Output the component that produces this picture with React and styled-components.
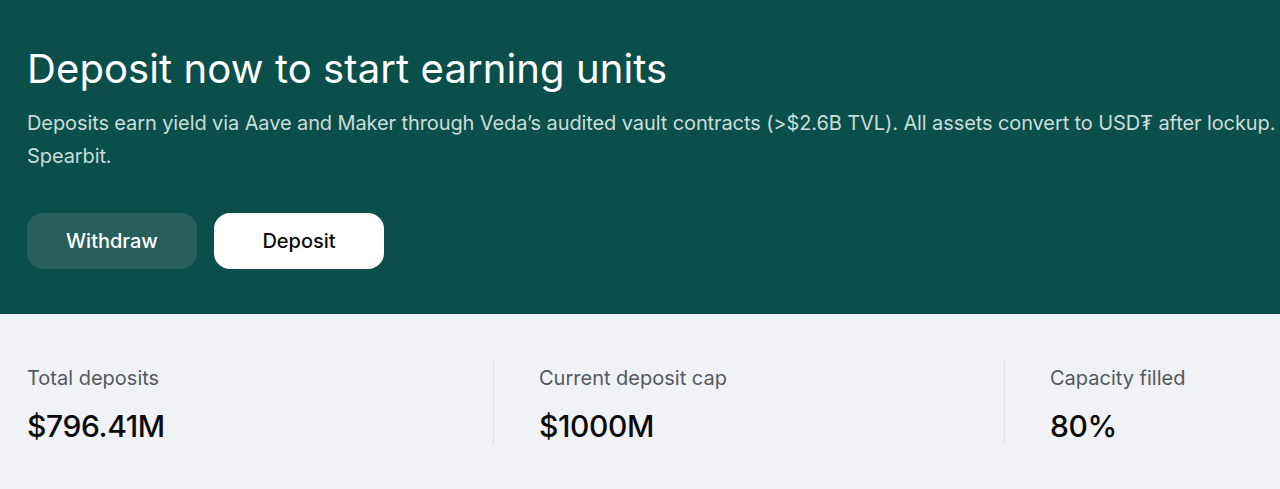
import React from "react";
import styled, { createGlobalStyle } from "styled-components";

const Global = createGlobalStyle`
  html, body { margin: 0; padding: 0; background: #f0f2f5; overflow: hidden; }
  body { font-family: Inter, "Noto Sans", "Liberation Sans", sans-serif; -webkit-font-smoothing: antialiased; }
  * { box-sizing: border-box; }
`;

const Page = styled.main`
  width: 1280px;
  overflow: hidden;
`;

const Hero = styled.section`
  background: #0b4f4a;
  padding: 45px 27px 45px;
  display: flex;
  flex-direction: column;
`;

const Title = styled.h1`
  margin: 0;
  font-size: 40px;
  line-height: 48px;
  font-weight: 400;
  letter-spacing: 0.1px;
  color: #ffffff;
  white-space: nowrap;
`;

const Description = styled.p`
  margin: 14px 0 0;
  font-size: 20px;
  line-height: 33px;
  font-weight: 400;
  letter-spacing: -0.1px;
  color: #c9ddd9;
  white-space: nowrap;
`;

const Actions = styled.div`
  display: flex;
  gap: 17px;
  margin-top: 40px;
`;

const Button = styled.button`
  width: 170px;
  height: 56px;
  border: none;
  border-radius: 16px;
  font-family: inherit;
  font-size: 20px;
  font-weight: 500;
  letter-spacing: 0;
  cursor: pointer;
  background: ${(p) => (p.$primary ? "#ffffff" : "#285f5a")};
  color: ${(p) => (p.$primary ? "#0b0b0b" : "#ffffff")};
`;

const Stats = styled.section`
  background: #f0f2f5;
  padding: 46px 27px 44px;
  display: flex;
`;

const Stat = styled.div`
  flex: 0 0 ${(p) => (p.$divided ? "511px" : "466px")};
  padding: 6px 0 1px ${(p) => (p.$divided ? "45px" : "0")};
  border-left: ${(p) => (p.$divided ? "1px solid #dde0e4" : "none")};
  display: flex;
  flex-direction: column;
  gap: 18px;
`;

const Label = styled.div`
  font-size: 20px;
  line-height: 24px;
  font-weight: 400;
  letter-spacing: 0;
  color: #55595e;
`;

const Value = styled.div`
  font-size: 30px;
  line-height: 36px;
  font-weight: 500;
  letter-spacing: -0.4px;
  color: #0a0a0a;
`;

const stats = [
  { label: "Total deposits", value: "$796.41M" },
  { label: "Current deposit cap", value: "$1000M" },
  { label: "Capacity filled", value: "80%" },
];

export default function App() {
  return (
    <Page>
      <Global />
      <Hero>
        <Title>Deposit now to start earning units</Title>
        <Description>
          Deposits earn yield via Aave and Maker through Veda’s audited vault contracts (&gt;$2.6B TVL). All assets convert to USD₮ after lockup.
          <br />
          Spearbit.
        </Description>
        <Actions>
          <Button>Withdraw</Button>
          <Button $primary>Deposit</Button>
        </Actions>
      </Hero>
      <Stats>
        {stats.map((s, i) => (
          <Stat key={s.label} $divided={i > 0}>
            <Label>{s.label}</Label>
            <Value>{s.value}</Value>
          </Stat>
        ))}
      </Stats>
    </Page>
  );
}
